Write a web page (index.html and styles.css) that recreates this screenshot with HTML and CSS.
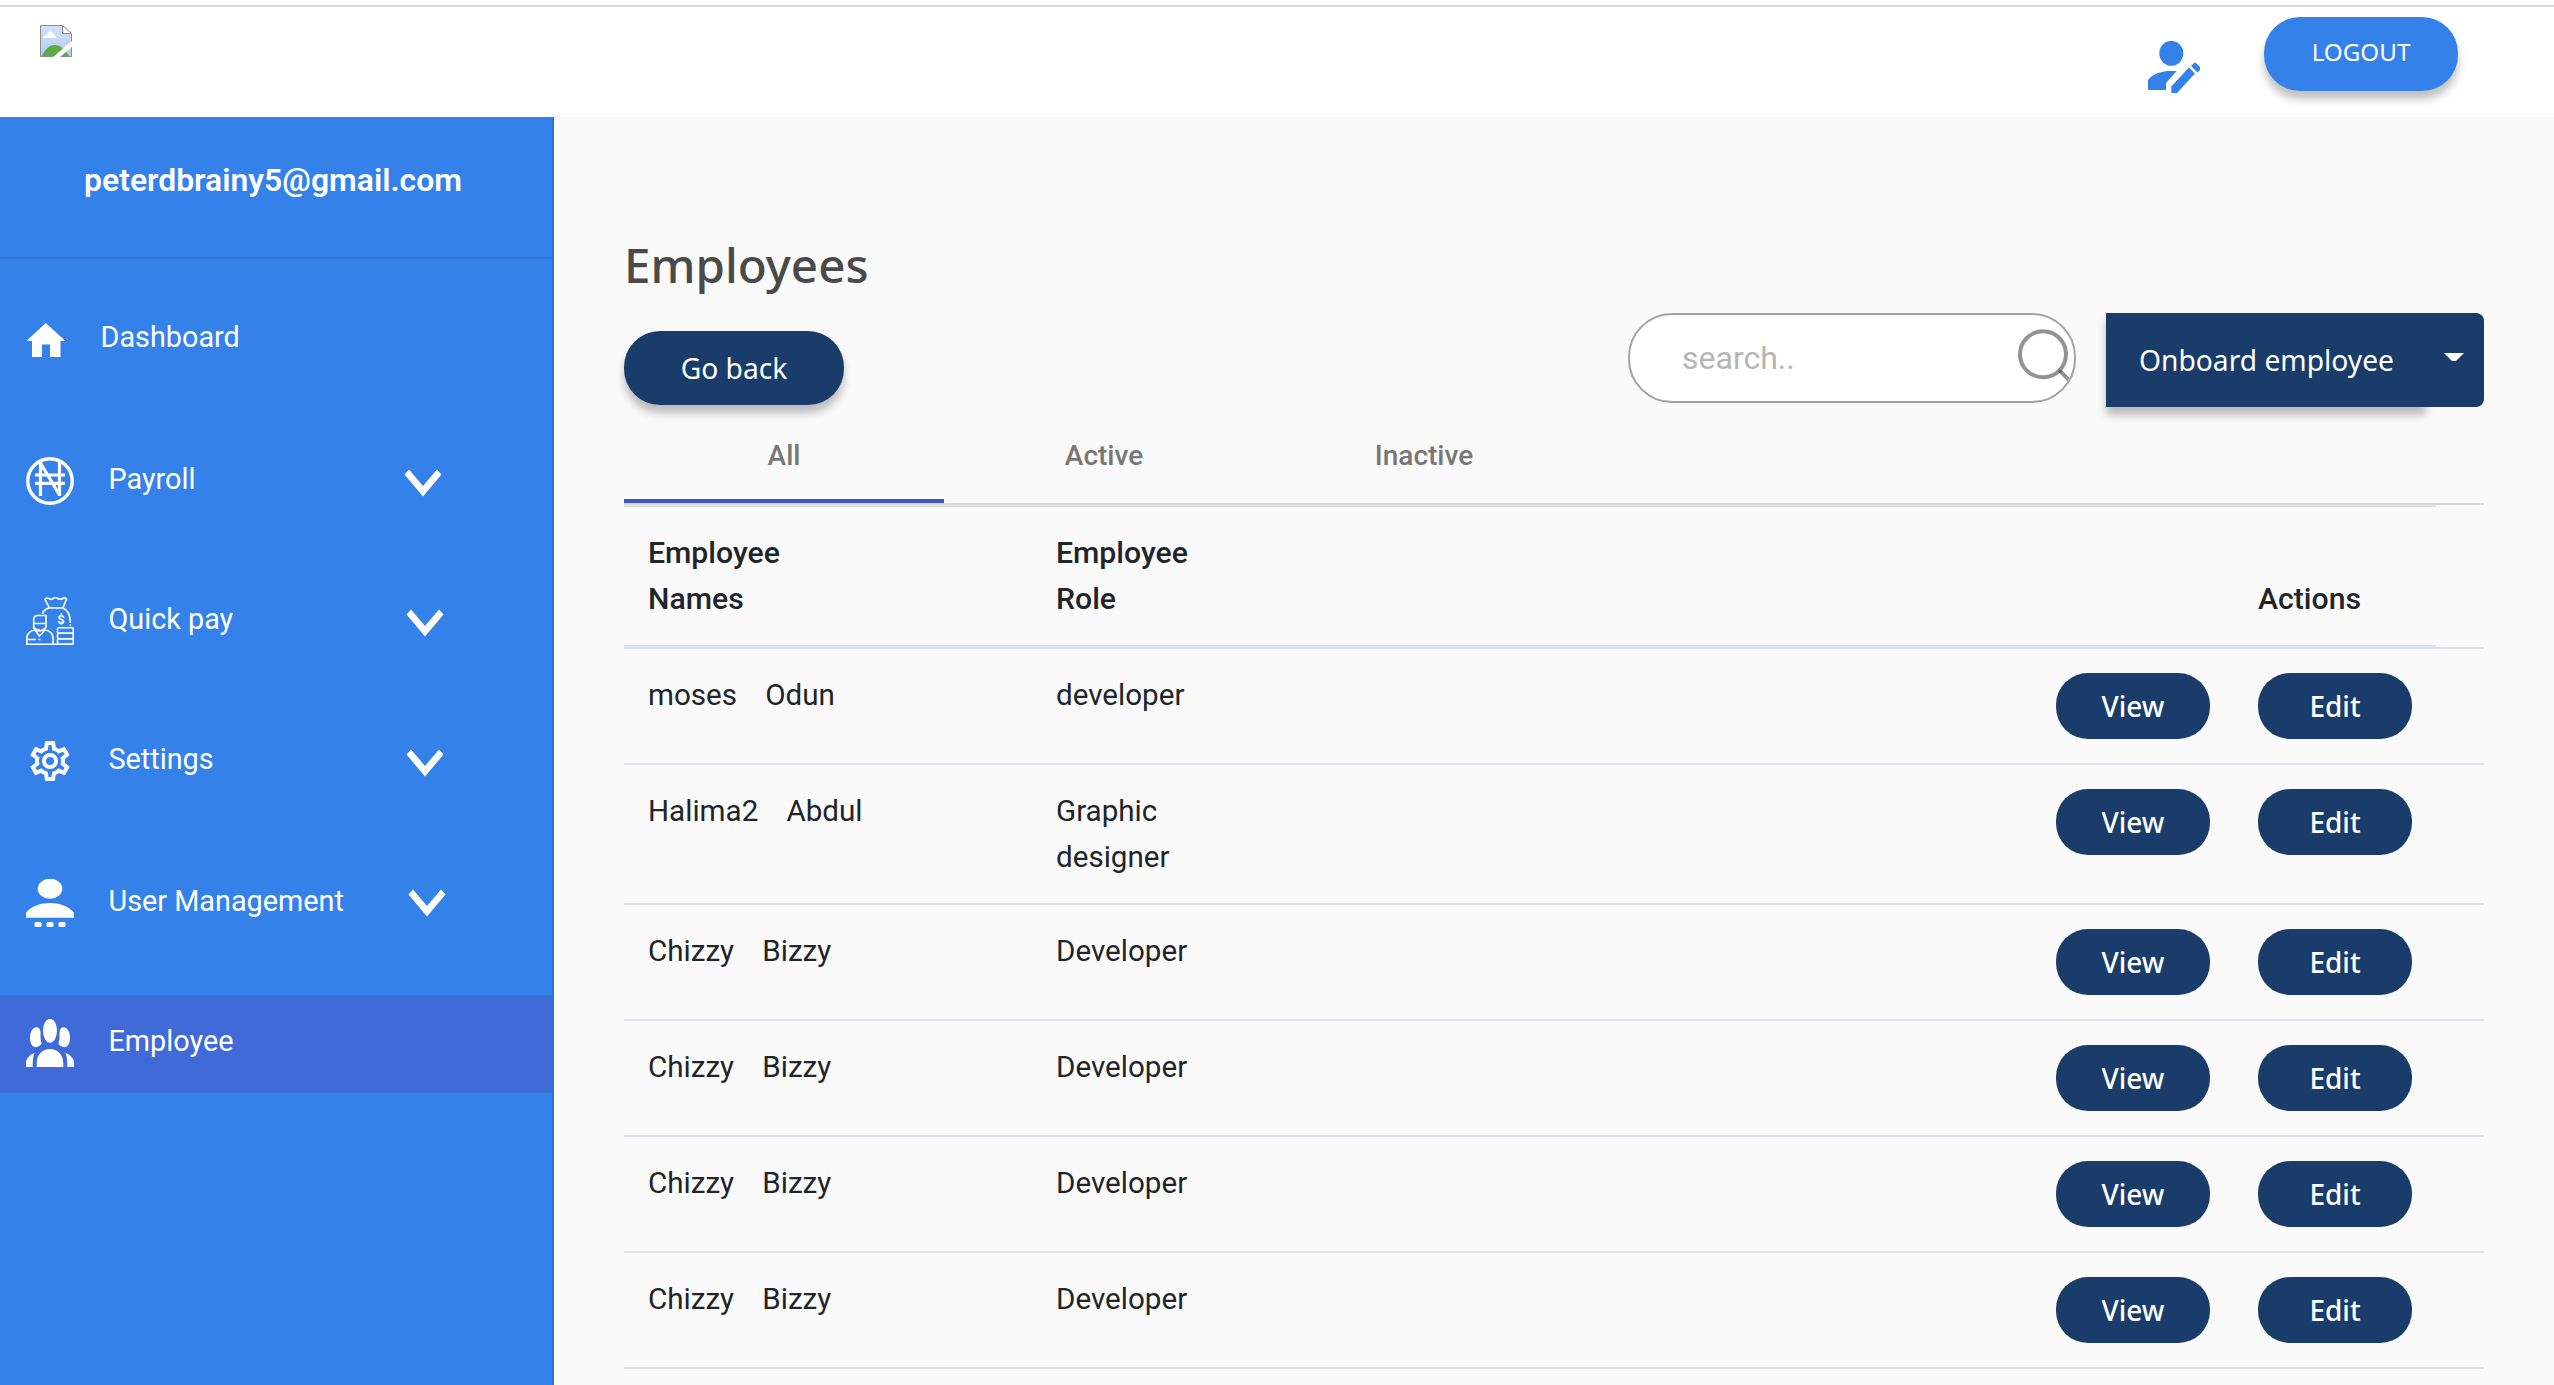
FILE: index.html
```html
<!DOCTYPE html>
<html lang="en">
<head>
<meta charset="utf-8">
<title>Employees</title>
<link rel="stylesheet" href="styles.css">
</head>
<body>
<svg class="defs" width="0" height="0" aria-hidden="true">
  <symbol id="chevron" viewBox="0 0 38 28"><path d="M0.5 5.5 5 0.5 19 17 33 0.5 37.5 5.5 19 27.5z" fill="#fff"/></symbol>
</svg>

<header class="topbar">
  <svg class="logo" viewBox="0 0 32 32">
    <defs><linearGradient id="sky" x1="0" y1="0" x2="0" y2="1"><stop offset="0" stop-color="#d3e2fa"/><stop offset="1" stop-color="#b5cbee"/></linearGradient></defs>
    <path d="M.5.5H22.5L31.5 9V31.5H.5z" fill="url(#sky)" stroke="#8d8d8d"/>
    <path d="M3 13c0-2 2-3 4-2.500C7.500 7.500 9 6.500 10.500 6.500S13.500 8 13.700 9.700C15.500 10 16 11.500 16 13z" fill="#fff"/>
    <path d="M1.500 31C6 23 10 20 15 20s10 4 14 11z" fill="#5dac40"/>
    <path d="M22.500.5V8.500H31.500z" fill="#fff" stroke="#8d8d8d"/>
    <path d="M13 32 32 16V22L20 32z" fill="#fff"/>
  </svg>
  <svg class="profile-icon" viewBox="0 0 52 52" fill="#3581ea">
    <ellipse cx="23.300" cy="12.300" rx="12" ry="12.500"/>
    <path d="M0 49V39C5 32.500 14 30 23 30H28.700L18 42V49z"/>
    <path d="M23.300 52V45.500L41 26.500 47 32.500 29 52z"/>
    <path d="M43 25 46 22Q47 21 48 22L52 26V29L49.500 31.500z"/>
  </svg>
  <button class="btn btn-logout">LOGOUT</button>
</header>

<div class="layout">
  <aside class="sidebar">
    <div class="account">peterdbrainy5@gmail.com</div>
    <nav class="menu">
      <a class="item">
        <svg class="icon icon-home" viewBox="0 0 40 48" fill="#fff"><path d="M19.700 8 39.500 26H34.500V42H24V29.500H16V42H6V26H.5z"/></svg>
        <span>Dashboard</span>
      </a>
      <a class="item">
        <svg class="icon" viewBox="0 0 48 48" fill="none" stroke="#fff" stroke-width="3.400"><circle cx="24" cy="24" r="22.200"/><path d="M14.500 4V39M33.500 4V39M14.500 6 33.500 38M9 18H39M9 26.300H39" stroke-width="3.200"/></svg>
        <span>Payroll</span>
        <svg class="chevron chevron-near"><use href="#chevron"/></svg>
      </a>
      <a class="item">
        <svg class="icon" viewBox="0 0 48 48" fill="none" stroke="#fff" stroke-width="1.600">
          <path d="M23.500 11 19 2.500Q20.500 0 23 1.500 25 3 27 1.500 29.500 0 32 1.500 34.500 3 36.500 1.500 39 0 40.500 2L37 11zM17 17V15C19 12.500 21 11 23.500 11M37 11C42 13 44.300 18 44.300 26M44.300 27.500V29"/>
          <path d="M7.700 32V23Q7.700 18.500 12 18.500H20V30Q17 34 13.800 34T7.700 30M7.700 26.500H20"/>
          <path d="M.8 47V41Q1.500 34 9 33L13.500 39 19 33Q26.500 34 27 41V47M10 35 13.500 32M1 42.500H10M12.500 42.500H14.500M0 47.300H47"/>
          <rect x="31.500" y="30.700" width="15.800" height="5.500" rx="1.500"/><rect x="31.500" y="36.200" width="15.800" height="5.500" rx="1.500"/><rect x="31.500" y="41.700" width="15.800" height="5.600" rx="1.500"/>
          <text class="coin" x="35" y="27">$</text>
        </svg>
        <span>Quick pay</span>
        <svg class="chevron chevron-mid"><use href="#chevron"/></svg>
      </a>
      <a class="item">
        <svg class="icon" viewBox="0 0 24 24" fill="#fff"><path d="M12,8A4,4 0 0,1 16,12A4,4 0 0,1 12,16A4,4 0 0,1 8,12A4,4 0 0,1 12,8M12,10A2,2 0 0,0 10,12A2,2 0 0,0 12,14A2,2 0 0,0 14,12A2,2 0 0,0 12,10M10,22C9.75,22 9.54,21.82 9.5,21.58L9.13,18.93C8.5,18.68 7.96,18.34 7.44,17.94L4.95,18.95C4.73,19.03 4.46,18.95 4.34,18.73L2.34,15.27C2.21,15.05 2.27,14.78 2.46,14.63L4.57,12.97L4.5,12L4.57,11L2.46,9.37C2.27,9.22 2.21,8.95 2.34,8.73L4.34,5.27C4.46,5.05 4.73,4.96 4.95,5.05L7.44,6.05C7.96,5.66 8.5,5.32 9.13,5.07L9.5,2.42C9.54,2.18 9.75,2 10,2H14C14.25,2 14.46,2.18 14.5,2.42L14.87,5.07C15.5,5.32 16.04,5.66 16.56,6.05L19.05,5.05C19.27,4.96 19.54,5.05 19.66,5.27L21.66,8.73C21.79,8.95 21.73,9.22 21.54,9.37L19.43,11L19.5,12L19.43,13L21.54,14.63C21.73,14.78 21.79,15.05 21.66,15.27L19.66,18.73C19.54,18.95 19.27,19.04 19.05,18.95L16.56,17.95C16.04,18.34 15.5,18.68 14.87,18.93L14.5,21.58C14.46,21.82 14.25,22 14,22H10M11.25,4L10.88,6.61C9.68,6.86 8.62,7.5 7.85,8.39L5.44,7.35L4.69,8.65L6.8,10.2C6.4,11.37 6.4,12.64 6.8,13.8L4.68,15.36L5.43,16.66L7.86,15.62C8.63,16.5 9.68,17.14 10.87,17.38L11.24,20H12.76L13.13,17.39C14.32,17.14 15.37,16.5 16.14,15.62L18.57,16.66L19.32,15.36L17.2,13.81C17.6,12.64 17.6,11.37 17.2,10.2L19.31,8.65L18.56,7.35L16.15,8.39C15.38,7.5 14.32,6.86 13.12,6.62L12.75,4H11.25Z"/></svg>
        <span>Settings</span>
        <svg class="chevron chevron-mid"><use href="#chevron"/></svg>
      </a>
      <a class="item">
        <svg class="icon" viewBox="0 0 48 48" fill="#fff"><ellipse cx="24" cy="9.700" rx="12.300" ry="10"/><path d="M0 38.700V34C5 27 15 24 24 24S43 27 48 34V38.700z"/><rect x="8.500" y="43" width="7" height="5" rx="1.500"/><rect x="20.500" y="43" width="7" height="5" rx="1.500"/><rect x="32.500" y="43" width="7" height="5" rx="1.500"/></svg>
        <span>User Management</span>
        <svg class="chevron chevron-far"><use href="#chevron"/></svg>
      </a>
      <a class="item item-active">
        <svg class="icon" viewBox="0 0 48 48" fill="#fff"><ellipse cx="24" cy="11.800" rx="7" ry="12"/><path d="M11 8.300Q14 9 14.500 13 14 18 15.500 25 13 28.300 10 28.300C6 28.300 4 24 4 18.500S7 8 11 8.300zM37 8.300Q34 9 33.500 13 34 18 32.500 25 35 28.300 38 28.300C42 28.300 44 24 44 18.500S41 8 37 8.300z"/><path d="M10.700 48V44C11 35 17 30 24 30S37 35 37.300 44V48zM0 48V42Q3 35.500 8.500 34 6.500 39 6.700 48zM48 48V42Q45 35.500 39.500 34 41.500 39 41.300 48z"/></svg>
        <span>Employee</span>
      </a>
    </nav>
  </aside>

  <main class="content">
    <h1 class="title">Employees</h1>
    <div class="toolbar">
      <button class="btn btn-back">Go back</button>
      <div class="search">
        <input class="search-input" type="text" placeholder="search..">
        <svg class="search-icon" viewBox="0 0 52 52" fill="none" stroke="#939393"><circle cx="25" cy="25.300" r="23" stroke-width="4"/><path d="M41 41 52 52" stroke-width="4"/><circle cx="42" cy="42.200" r="1.500" fill="#555" stroke="none"/></svg>
      </div>
      <div class="split">
        <button class="btn btn-onboard">Onboard employee</button>
        <button class="btn btn-caret" aria-label="More"><svg class="caret" viewBox="0 0 20 8"><path d="M0 0H20L12.500 7.500Q10 8.500 7.500 7.500z" fill="#fff"/></svg></button>
      </div>
    </div>

    <div class="tabs">
      <a class="tab tab-active">All</a>
      <a class="tab">Active</a>
      <a class="tab">Inactive</a>
    </div>

    <div class="thead">
      <div>Employee<br>Names</div>
      <div>Employee<br>Role</div>
      <div class="th-actions">Actions</div>
    </div>
    <div class="tbody">
      <div class="row"><div>moses&nbsp;&nbsp;&nbsp;&nbsp;Odun</div><div>developer</div><div class="actions"><button class="btn btn-row">View</button><button class="btn btn-row">Edit</button></div></div>
      <div class="row"><div>Halima2&nbsp;&nbsp;&nbsp;&nbsp;Abdul</div><div>Graphic<br>designer</div><div class="actions"><button class="btn btn-row">View</button><button class="btn btn-row">Edit</button></div></div>
      <div class="row"><div>Chizzy&nbsp;&nbsp;&nbsp;&nbsp;Bizzy</div><div>Developer</div><div class="actions"><button class="btn btn-row">View</button><button class="btn btn-row">Edit</button></div></div>
      <div class="row"><div>Chizzy&nbsp;&nbsp;&nbsp;&nbsp;Bizzy</div><div>Developer</div><div class="actions"><button class="btn btn-row">View</button><button class="btn btn-row">Edit</button></div></div>
      <div class="row"><div>Chizzy&nbsp;&nbsp;&nbsp;&nbsp;Bizzy</div><div>Developer</div><div class="actions"><button class="btn btn-row">View</button><button class="btn btn-row">Edit</button></div></div>
      <div class="row"><div>Chizzy&nbsp;&nbsp;&nbsp;&nbsp;Bizzy</div><div>Developer</div><div class="actions"><button class="btn btn-row">View</button><button class="btn btn-row">Edit</button></div></div>
    </div>
  </main>
</div>
</body>
</html>
```
FILE: styles.css
```css
* { box-sizing: border-box; }

body {
  margin: 0;
  height: 1385px;
  overflow: hidden;
  display: flex;
  flex-direction: column;
  background: #fafafa;
  color: #212529;
  font-family: Roboto, sans-serif;
}

svg { display: block; flex: none; }
.defs { position: absolute; }

.btn {
  border: 0;
  padding: 0;
  background: #193c6b;
  color: #fff;
  font: 400 28.2px "Noto Sans", "Open Sans", sans-serif;
  white-space: nowrap;
}

/* Top bar */
.topbar {
  flex: none;
  height: 117px;
  display: flex;
  align-items: flex-start;
  padding: 0 96px 0 40px;
  background: linear-gradient(#dadada, #dadada) 0 5px / 100% 2px no-repeat #fff;
}
.logo { width: 32px; height: 32px; margin-top: 25px; }
.profile-icon { width: 52px; height: 52px; margin: 41px 64px 0 auto; }
.btn-logout {
  width: 194px;
  height: 74px;
  margin-top: 17px;
  padding-bottom: 5px;
  border-radius: 36px;
  background: #3581ea;
  font-size: 24.2px;
  box-shadow: 0 8px 8px rgba(0, 0, 0, .25);
}

.layout { flex: 1; display: flex; min-height: 0; }

/* Sidebar */
.sidebar {
  flex: none;
  width: 554px;
  background: #3581ea;
  border-right: 2px solid #3074d1;
  color: #fff;
}
.account {
  height: 142px;
  padding: 0 6px 14px 0;
  border-bottom: 2px solid #3074d1;
  display: flex;
  align-items: center;
  justify-content: center;
  font-size: 31.9px;
  font-weight: 600;
}
.menu {
  display: grid;
  grid-template-rows: 142px 140px 140px 142px 140px 98px;
  padding-top: 32px;
}
.item {
  height: 96px;
  display: flex;
  align-items: center;
  gap: 34.5px;
  padding-left: 26px;
  font-size: 28.8px;
}
.item span { padding-bottom: 4px; }
.item-active {
  height: 98px;
  background: #416ad9;
  border-bottom: 2px solid #3b70d0;
}
.icon { width: 48px; height: 48px; }
.icon-home { width: 40px; }
.coin { font: 700 13px Roboto, sans-serif; text-anchor: middle; fill: #fff; stroke: none; }
.chevron { width: 38px; height: 28px; margin: 4px 0 0 auto; }
.chevron-near { margin-right: 110px; }
.chevron-mid { margin-right: 108px; }
.chevron-far { margin: 0 106px 0 auto; }

/* Content */
.content { flex: 1; padding: 117px 70px 0; }
.title {
  margin: 0 0 18px;
  color: #4a4a4a;
  font: 500 47.5px/61px "Noto Sans", "Open Sans", sans-serif;
}
.toolbar { display: flex; align-items: flex-start; height: 94px; }
.btn-back {
  width: 220px;
  height: 74px;
  margin: 18px auto 0 0;
  border-radius: 36px;
  box-shadow: 0 8px 8px rgba(0, 0, 0, .25);
}
.search {
  width: 448px;
  height: 90px;
  margin-right: 30px;
  padding: 0 4px 0 52px;
  display: flex;
  align-items: center;
  overflow: hidden;
  border: 2px solid #a3a3a3;
  border-radius: 44px;
  background: #fff;
}
.search-input {
  flex: 1;
  min-width: 0;
  padding: 0;
  border: 0;
  outline: 0;
  background: none;
  font: 32px Roboto, sans-serif;
}
.search-input::placeholder { color: #b5b5b5; }
.search-icon { width: 52px; height: 52px; margin-bottom: 6px; }
.split { display: flex; height: 94px; }
.btn-onboard { width: 320px; padding-left: 1px; box-shadow: 0 8px 8px rgba(0, 0, 0, .25); }
.btn-caret {
  width: 58px;
  display: flex;
  justify-content: center;
  padding: 40px 2px 0 0;
  border-radius: 0 8px 8px 0;
  position: relative;
}
.caret { width: 20px; height: 8px; }

.tabs { display: flex; border-bottom: 2px solid #dadada; }
.tab {
  width: 320px;
  height: 96px;
  color: #777;
  font-size: 28px;
  font-weight: 500;
  line-height: 97px;
  text-align: center;
}
.tab-active { box-shadow: inset 0 -4px #4353b5; }

/* Employee table */
.thead,
.row {
  display: grid;
  padding: 23px 0 0 24px;
  font-size: 29.6px;
  line-height: 46px;
  word-spacing: -0.3px;
  border-top: 2px solid #dee2e6;
}
.thead {
  grid-template-columns: 408px 1fr 178px;
  width: 1812px;
  height: 142px;
  padding-bottom: 25px;
  border-bottom: 2px solid #dee2e6;
  font-size: 30.2px;
  font-weight: 500;
}
.th-actions { align-self: end; }
.row {
  grid-template-columns: 408px 1fr auto;
  padding: 23px 72px 23px 24px;
}
.row:last-child { border-bottom: 2px solid #dee2e6; }
.actions { display: flex; gap: 48px; margin: 1px 0; }
.btn-row { width: 154px; height: 66px; border-radius: 32px; font-size: 28px; font-weight: 500; }
```
